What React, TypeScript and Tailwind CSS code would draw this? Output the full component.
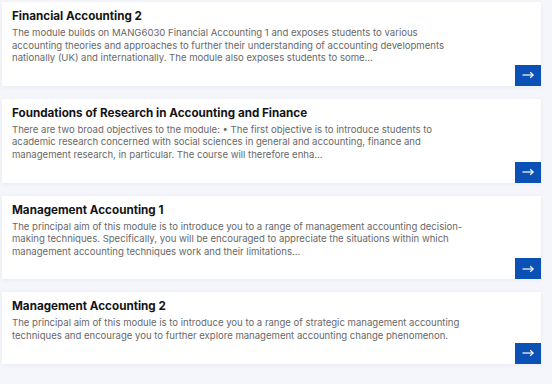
import React from "react";

const items = [
  {
    title: "Financial Accounting 2",
    desc: "The module builds on MANG6030 Financial Accounting 1 and exposes students to various accounting theories and approaches to further their understanding of accounting developments nationally (UK) and internationally. The module also exposes students to some...",
  },
  {
    title: "Foundations of Research in Accounting and Finance",
    desc: "There are two broad objectives to the module: \u2022 The first objective is to introduce students to academic research concerned with social sciences in general and accounting, finance and management research, in particular. The course will therefore enha...",
  },
  {
    title: "Management Accounting 1",
    desc: "The principal aim of this module is to introduce you to a range of management accounting decision-making techniques. Specifically, you will be encouraged to appreciate the situations within which management accounting techniques work and their limitations...",
  },
  {
    title: "Management Accounting 2",
    desc: "The principal aim of this module is to introduce you to a range of strategic management accounting techniques and encourage you to further explore management accounting change phenomenon.",
  },
];

function Arrow() {
  return (
    <svg width="12" height="8" viewBox="0 0 12 8" fill="none">
      <path d="M0.5 4H11.2" stroke="white" strokeWidth="1.2" />
      <path d="M8.2 1.2L11.2 4L8.2 6.8" stroke="white" strokeWidth="1.2" fill="none" />
    </svg>
  );
}

export default function App() {
  return (
    <div
      className="w-[552px] h-[384px] overflow-hidden bg-[#f4f6fb] pl-[2px] pr-[11px] pt-[2px] flex flex-col gap-[13px]"
      style={{ fontFamily: "Inter, 'Noto Sans', sans-serif" }}
    >
      {items.map((it) => (
        <div
          key={it.title}
          className="bg-white shadow-[0_1px_4px_rgba(30,50,100,0.06)] flex flex-col"
        >
          <div className="pl-[10px] pt-[6px] pr-[12px]">
            <div className="text-[11.66px] leading-[16px] font-bold text-[#141414]">
              {it.title}
            </div>
            <div className="mt-[3px] max-w-[453px] text-[9.56px] leading-[12.6px] text-[#686868]">
              {it.desc}
            </div>
          </div>
          <div className="flex justify-end">
            <div className="w-[26px] h-[21px] bg-[#0b50b4] flex items-center justify-center">
              <Arrow />
            </div>
          </div>
        </div>
      ))}
    </div>
  );
}
